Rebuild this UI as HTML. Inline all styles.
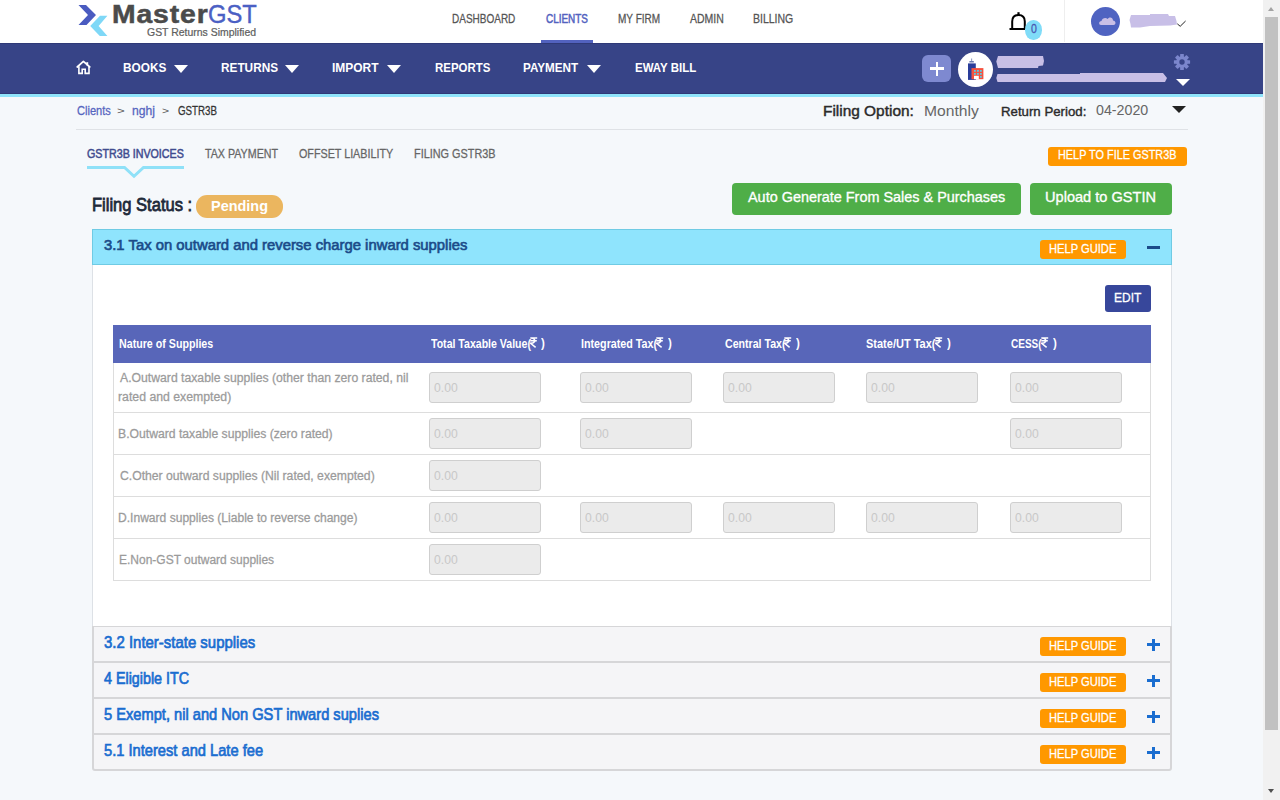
<!DOCTYPE html>
<html><head><meta charset="utf-8"><title>GSTR3B</title><style>
html,body{margin:0;padding:0}
body{width:1280px;height:800px;overflow:hidden;background:#f5f8fb;font-family:"Liberation Sans",sans-serif;position:relative}
.a{position:absolute}
.t{position:absolute;line-height:1;white-space:nowrap;transform-origin:0 0}
</style></head><body>
<div class="a" style="left:0px;top:0px;width:1263px;height:43px;background:#fff;"></div>
<svg class="a" style="left:74px;top:0px" width="40" height="40"><polygon points="4.5,5 12,5 22,15 12.5,25 4.5,25 14,15" fill="#4a5bc0"/><polygon points="26,15.8 33.4,15.8 24.6,26 33.4,36 25.8,36 16.2,26" fill="#7fd8f7"/></svg>
<div class="a" style="left:541px;top:40px;width:52px;height:3px;background:#5262bf;"></div>
<div class="a" style="left:1064px;top:0px;width:1px;height:42px;background:#eee;"></div>
<svg class="a" style="left:1005px;top:8px" width="24" height="26"><path d="M7.2,21 V13.5 C7.2,9 10,7 13.5,7 C17,7 19.8,9 19.8,13.5 V21" fill="none" stroke="#000" stroke-width="2"/><path d="M4.5,21 H20" stroke="#000" stroke-width="2"/><path d="M13.5,7.5 V4.2" stroke="#000" stroke-width="2.2"/></svg>
<div class="a" style="left:1025px;top:20px;width:16.5px;height:19.5px;border-radius:50%;background:#80dcf8"></div>
<div class="a" style="left:1090.5px;top:6.5px;width:29px;height:29px;border-radius:50%;background:#4f63c1"></div>
<svg class="a" style="left:1098px;top:14px" width="20" height="14"><path d="M3,11 C0.5,11 0.5,7 3.5,7 C4,4 8,3 9.5,5 C11,2.5 15,3 15,6.5 C18,6.5 18.5,11 15.5,11 Z" fill="#c9bfe6"/></svg>
<svg class="a" style="left:0;top:0" width="1263" height="43"><polygon points="1129.5,20 1131,15 1150,15 1150,14 1168,14 1169,16 1175,16 1176.5,21 1177,24.5 1170,25.5 1150,26 1140,27.5 1131,27.5 1130.5,24" fill="#c8bfe7"/></svg>
<svg class="a" style="left:1176px;top:18px" width="12" height="10"><path d="M1.3,5.8 L4.2,8.3 L9.6,3" fill="none" stroke="#222" stroke-width="1"/></svg>
<div class="a" style="left:0px;top:43px;width:1263px;height:51px;background:#374487;"></div>
<div class="a" style="left:0px;top:94px;width:1263px;height:3px;background:#8fe4fb;"></div>
<div class="a" style="left:0px;top:43px;width:1263px;height:1px;background:#2f3977;"></div>
<div class="a" style="left:0px;top:93px;width:1263px;height:1px;background:#2f3977;"></div>
<svg class="a" style="left:72px;top:56px" width="24" height="24"><path d="M5.2,11 L11.4,5.4 L17.8,11" fill="none" stroke="#fff" stroke-width="1.7" stroke-linecap="round" stroke-linejoin="round"/><path d="M6.9,10.2 V17.4 H10.2 V13.2 H13.2 V17.4 H17 V10.2" fill="none" stroke="#fff" stroke-width="1.6"/><rect x="14.3" y="6.2" width="1.9" height="3.2" fill="#fff"/></svg>
<div class="a" style="left:173.6px;top:64.6px;width:0;height:0;border-left:7.25px solid transparent;border-right:7.25px solid transparent;border-top:8px solid #fff"></div>
<div class="a" style="left:285.4px;top:64.6px;width:0;height:0;border-left:7.25px solid transparent;border-right:7.25px solid transparent;border-top:8px solid #fff"></div>
<div class="a" style="left:387px;top:64.6px;width:0;height:0;border-left:7.25px solid transparent;border-right:7.25px solid transparent;border-top:8px solid #fff"></div>
<div class="a" style="left:587px;top:64.6px;width:0;height:0;border-left:7.25px solid transparent;border-right:7.25px solid transparent;border-top:8px solid #fff"></div>
<div class="a" style="left:922px;top:55px;width:29px;height:27px;border-radius:6px;background:#7e89d0"></div>
<div class="a" style="left:935.8px;top:61.5px;width:2.5px;height:14px;background:#fff;"></div>
<div class="a" style="left:930px;top:67.3px;width:14px;height:2.5px;background:#fff;"></div>
<div class="a" style="left:958px;top:52px;width:35px;height:35px;border-radius:50%;background:#fff"></div>
<svg class="a" style="left:962px;top:55px" width="28" height="28"><rect x="9.3" y="3.5" width="0.8" height="2.5" fill="#6b7bb0"/><rect x="7.4" y="6" width="4.4" height="1.5" fill="#6b7bb0"/><rect x="6" y="8.4" width="7.8" height="16.5" fill="#2a3d9a"/><rect x="9.5" y="13.1" width="11.9" height="11.1" fill="#f5523f"/><rect x="12" y="20.8" width="4.8" height="3.4" fill="#fff"/><rect x="12" y="15" width="1.8" height="1.8" fill="#5ec9e0"/><rect x="12" y="18" width="1.8" height="1.8" fill="#5ec9e0"/><rect x="15" y="15" width="1.8" height="1.8" fill="#5ec9e0"/><rect x="15" y="18" width="1.8" height="1.8" fill="#5ec9e0"/><rect x="18" y="15" width="1.8" height="1.8" fill="#5ec9e0"/><rect x="18" y="18" width="1.8" height="1.8" fill="#5ec9e0"/><rect x="18" y="21" width="1.8" height="1.8" fill="#5ec9e0"/></svg>
<svg class="a" style="left:0;top:43px" width="1263" height="51"><g transform="translate(0,-43)" fill="#c8bfe6"><polygon points="996.3,61.5 998,56 1043,56 1044,61 1043,65.5 1038.5,66 1038,68 998,68"/><polygon points="996.3,78 997.5,74 1080,74 1080,73 1163,73 1167,78 1165,82 997.5,82"/></g></svg>
<svg class="a" style="left:1172px;top:52px" width="20" height="20"><g transform="translate(10,10)"><rect x="-1.85" y="-8.1" width="3.7" height="4.2" rx="0.5" fill="#7b86cc" transform="rotate(0)"/><rect x="-1.85" y="-8.1" width="3.7" height="4.2" rx="0.5" fill="#7b86cc" transform="rotate(45)"/><rect x="-1.85" y="-8.1" width="3.7" height="4.2" rx="0.5" fill="#7b86cc" transform="rotate(90)"/><rect x="-1.85" y="-8.1" width="3.7" height="4.2" rx="0.5" fill="#7b86cc" transform="rotate(135)"/><rect x="-1.85" y="-8.1" width="3.7" height="4.2" rx="0.5" fill="#7b86cc" transform="rotate(180)"/><rect x="-1.85" y="-8.1" width="3.7" height="4.2" rx="0.5" fill="#7b86cc" transform="rotate(225)"/><rect x="-1.85" y="-8.1" width="3.7" height="4.2" rx="0.5" fill="#7b86cc" transform="rotate(270)"/><rect x="-1.85" y="-8.1" width="3.7" height="4.2" rx="0.5" fill="#7b86cc" transform="rotate(315)"/><circle r="5.8" fill="#7b86cc"/><circle r="2.7" fill="#374487"/></g></svg>
<div class="a" style="left:1176px;top:79px;width:0;height:0;border-left:7.5px solid transparent;border-right:7.5px solid transparent;border-top:7px solid #fff"></div>
<div class="a" style="left:1171.6px;top:106px;width:0;height:0;border-left:7.0px solid transparent;border-right:7.0px solid transparent;border-top:7.6px solid #222"></div>
<div class="a" style="left:76px;top:129px;width:1112px;height:1px;background:#dfe2e6;"></div>
<svg class="a" style="left:80px;top:160px" width="110" height="24"><polyline points="7,7.5 44.5,7.5 54,16.3 63.5,7.5 104,7.5" fill="none" stroke="#8fe1f8" stroke-width="3"/></svg>
<div class="a" style="left:1048px;top:147px;width:139px;height:19px;border-radius:3px;background:#ff9800"></div>
<div class="a" style="left:196px;top:195px;width:87px;height:22.5px;border-radius:11px;background:#ebb65f"></div>
<div class="a" style="left:732px;top:183px;width:289px;height:32px;border-radius:4px;background:#4fae48"></div>
<div class="a" style="left:1029.5px;top:183px;width:142.5px;height:32px;border-radius:4px;background:#4fae48"></div>
<div class="a" style="left:92px;top:229px;width:1078px;height:396px;border:1px solid #dde1e6;border-bottom-color:#d6d6d8;background:#fff"></div>
<div class="a" style="left:92px;top:229px;width:1078px;height:34px;border:1px solid #6fcbe4;background:#8fe4fd"></div>
<div class="a" style="left:1040px;top:240px;width:86px;height:19px;border-radius:3px;background:#ff9800"></div>
<div class="a" style="left:1147px;top:245.6px;width:13px;height:3.8px;background:#1b4b89;"></div>
<div class="a" style="left:1105px;top:285px;width:46px;height:27px;border-radius:3px;background:#37479b"></div>
<div class="a" style="left:113px;top:325px;width:1038px;height:38px;background:#5866b9;"></div>
<svg class="a" style="left:529.8000000000001px;top:337px" width="8" height="11"><path d="M0.3,0.9 H7.2 M0.3,3.7 H6.8 M0.6,0.9 C4.6,0.9 5.2,3.5 4.6,4.6 C4,5.8 2.2,6.3 0.6,6.3 L5.6,10.3" fill="none" stroke="#fff" stroke-width="1.5"/></svg>
<svg class="a" style="left:656.1px;top:337px" width="8" height="11"><path d="M0.3,0.9 H7.2 M0.3,3.7 H6.8 M0.6,0.9 C4.6,0.9 5.2,3.5 4.6,4.6 C4,5.8 2.2,6.3 0.6,6.3 L5.6,10.3" fill="none" stroke="#fff" stroke-width="1.5"/></svg>
<svg class="a" style="left:784.1px;top:337px" width="8" height="11"><path d="M0.3,0.9 H7.2 M0.3,3.7 H6.8 M0.6,0.9 C4.6,0.9 5.2,3.5 4.6,4.6 C4,5.8 2.2,6.3 0.6,6.3 L5.6,10.3" fill="none" stroke="#fff" stroke-width="1.5"/></svg>
<svg class="a" style="left:935.1px;top:337px" width="8" height="11"><path d="M0.3,0.9 H7.2 M0.3,3.7 H6.8 M0.6,0.9 C4.6,0.9 5.2,3.5 4.6,4.6 C4,5.8 2.2,6.3 0.6,6.3 L5.6,10.3" fill="none" stroke="#fff" stroke-width="1.5"/></svg>
<svg class="a" style="left:1041.1px;top:337px" width="8" height="11"><path d="M0.3,0.9 H7.2 M0.3,3.7 H6.8 M0.6,0.9 C4.6,0.9 5.2,3.5 4.6,4.6 C4,5.8 2.2,6.3 0.6,6.3 L5.6,10.3" fill="none" stroke="#fff" stroke-width="1.5"/></svg>
<div class="a" style="left:113px;top:363px;width:1px;height:218px;background:#dddddd;"></div>
<div class="a" style="left:1150px;top:363px;width:1px;height:218px;background:#dddddd;"></div>
<div class="a" style="left:113px;top:412.0px;width:1038px;height:1px;background:#dddddd;"></div>
<div class="a" style="left:113px;top:454.0px;width:1038px;height:1px;background:#dddddd;"></div>
<div class="a" style="left:113px;top:496.0px;width:1038px;height:1px;background:#dddddd;"></div>
<div class="a" style="left:113px;top:538.0px;width:1038px;height:1px;background:#dddddd;"></div>
<div class="a" style="left:113px;top:580.0px;width:1038px;height:1px;background:#dddddd;"></div>
<div class="a" style="left:429px;top:372px;width:110px;height:29px;border:1px solid #cfcfcf;border-radius:3px;background:#ebebeb"></div>
<div class="a" style="left:580px;top:372px;width:110px;height:29px;border:1px solid #cfcfcf;border-radius:3px;background:#ebebeb"></div>
<div class="a" style="left:723px;top:372px;width:110px;height:29px;border:1px solid #cfcfcf;border-radius:3px;background:#ebebeb"></div>
<div class="a" style="left:866px;top:372px;width:110px;height:29px;border:1px solid #cfcfcf;border-radius:3px;background:#ebebeb"></div>
<div class="a" style="left:1010px;top:372px;width:110px;height:29px;border:1px solid #cfcfcf;border-radius:3px;background:#ebebeb"></div>
<div class="a" style="left:429px;top:418px;width:110px;height:29px;border:1px solid #cfcfcf;border-radius:3px;background:#ebebeb"></div>
<div class="a" style="left:580px;top:418px;width:110px;height:29px;border:1px solid #cfcfcf;border-radius:3px;background:#ebebeb"></div>
<div class="a" style="left:1010px;top:418px;width:110px;height:29px;border:1px solid #cfcfcf;border-radius:3px;background:#ebebeb"></div>
<div class="a" style="left:429px;top:460px;width:110px;height:29px;border:1px solid #cfcfcf;border-radius:3px;background:#ebebeb"></div>
<div class="a" style="left:429px;top:502px;width:110px;height:29px;border:1px solid #cfcfcf;border-radius:3px;background:#ebebeb"></div>
<div class="a" style="left:580px;top:502px;width:110px;height:29px;border:1px solid #cfcfcf;border-radius:3px;background:#ebebeb"></div>
<div class="a" style="left:723px;top:502px;width:110px;height:29px;border:1px solid #cfcfcf;border-radius:3px;background:#ebebeb"></div>
<div class="a" style="left:866px;top:502px;width:110px;height:29px;border:1px solid #cfcfcf;border-radius:3px;background:#ebebeb"></div>
<div class="a" style="left:1010px;top:502px;width:110px;height:29px;border:1px solid #cfcfcf;border-radius:3px;background:#ebebeb"></div>
<div class="a" style="left:429px;top:544px;width:110px;height:29px;border:1px solid #cfcfcf;border-radius:3px;background:#ebebeb"></div>
<div class="a" style="left:92px;top:626px;width:1076px;height:34px;border:2px solid #d6d6d8;border-top:1px solid #d6d6d8;background:#f5f5f7;"></div>
<div class="a" style="left:1040px;top:637px;width:86px;height:19px;border-radius:3px;background:#ff9800"></div>
<div class="a" style="left:1151.8px;top:638.6px;width:3.2px;height:12.6px;background:#1a6dd0;"></div>
<div class="a" style="left:1147px;top:643.3px;width:13px;height:3.2px;background:#1a6dd0;"></div>
<div class="a" style="left:92px;top:662px;width:1076px;height:34px;border:2px solid #d6d6d8;border-top:1px solid #d6d6d8;background:#f5f5f7;"></div>
<div class="a" style="left:1040px;top:673px;width:86px;height:19px;border-radius:3px;background:#ff9800"></div>
<div class="a" style="left:1151.8px;top:674.6px;width:3.2px;height:12.6px;background:#1a6dd0;"></div>
<div class="a" style="left:1147px;top:679.3px;width:13px;height:3.2px;background:#1a6dd0;"></div>
<div class="a" style="left:92px;top:698px;width:1076px;height:34px;border:2px solid #d6d6d8;border-top:1px solid #d6d6d8;background:#f5f5f7;"></div>
<div class="a" style="left:1040px;top:709px;width:86px;height:19px;border-radius:3px;background:#ff9800"></div>
<div class="a" style="left:1151.8px;top:710.6px;width:3.2px;height:12.6px;background:#1a6dd0;"></div>
<div class="a" style="left:1147px;top:715.3px;width:13px;height:3.2px;background:#1a6dd0;"></div>
<div class="a" style="left:92px;top:734px;width:1076px;height:34px;border:2px solid #d6d6d8;border-top:1px solid #d6d6d8;background:#f5f5f7;border-radius:0 0 3px 3px;"></div>
<div class="a" style="left:1040px;top:745px;width:86px;height:19px;border-radius:3px;background:#ff9800"></div>
<div class="a" style="left:1151.8px;top:746.6px;width:3.2px;height:12.6px;background:#1a6dd0;"></div>
<div class="a" style="left:1147px;top:751.3px;width:13px;height:3.2px;background:#1a6dd0;"></div>
<div class="a" style="left:1263px;top:0px;width:17px;height:800px;background:#f1f1f1;"></div>
<div class="a" style="left:1265px;top:17px;width:13px;height:713px;background:#c1c1c1;"></div>
<div class="a" style="left:1268px;top:7px;width:0;height:0;border-left:3.5px solid transparent;border-right:3.5px solid transparent;border-bottom:4px solid #a3a3a3"></div>
<div class="a" style="left:1268px;top:789px;width:0;height:0;border-left:3.5px solid transparent;border-right:3.5px solid transparent;border-top:4px solid #505050"></div>
<div class="t" style="left:111.57px;top:1.39px;font-size:26.0px;font-weight:700;color:#4b4b4b;transform:scaleX(1.0901);letter-spacing:0.8px;-webkit-text-stroke:0.5px #4b4b4b;">Master</div>
<div class="t" style="left:207.59px;top:1.39px;font-size:26.0px;font-weight:400;color:#4b60c4;transform:scaleX(0.9135);-webkit-text-stroke:0.4px #4b60c4;">GST</div>
<div class="t" style="left:146.50px;top:27.11px;font-size:10.5px;font-weight:400;-webkit-text-stroke:0.23px #5f5f5f;color:#5f5f5f;transform:scaleX(0.9954);">GST Returns Simplified</div>
<div class="t" style="left:451.87px;top:12.84px;font-size:12.0px;font-weight:400;-webkit-text-stroke:0.26px #555;color:#555;transform:scaleX(0.8333);">DASHBOARD</div>
<div class="t" style="left:545.80px;top:12.84px;font-size:12.0px;font-weight:400;-webkit-text-stroke:0.5px #5262bf;color:#5262bf;transform:scaleX(0.8275);">CLIENTS</div>
<div class="t" style="left:617.56px;top:12.84px;font-size:12.0px;font-weight:400;-webkit-text-stroke:0.26px #555;color:#555;transform:scaleX(0.8367);">MY FIRM</div>
<div class="t" style="left:689.80px;top:12.84px;font-size:12.0px;font-weight:400;-webkit-text-stroke:0.26px #555;color:#555;transform:scaleX(0.8737);">ADMIN</div>
<div class="t" style="left:753.02px;top:12.84px;font-size:12.0px;font-weight:400;-webkit-text-stroke:0.26px #555;color:#555;transform:scaleX(0.8756);">BILLING</div>
<div class="t" style="left:1030.50px;top:21.99px;font-size:13.0px;font-weight:400;-webkit-text-stroke:0.29px #4a55b0;color:#4a55b0;transform:scaleX(0.8143);">0</div>
<div class="t" style="left:122.59px;top:60.99px;font-size:13.0px;font-weight:700;color:#fff;transform:scaleX(0.9087);">BOOKS</div>
<div class="t" style="left:220.69px;top:60.99px;font-size:13.0px;font-weight:700;color:#fff;transform:scaleX(0.9081);">RETURNS</div>
<div class="t" style="left:332.48px;top:60.99px;font-size:13.0px;font-weight:700;color:#fff;transform:scaleX(0.9200);">IMPORT</div>
<div class="t" style="left:435.12px;top:60.99px;font-size:13.0px;font-weight:700;color:#fff;transform:scaleX(0.8806);">REPORTS</div>
<div class="t" style="left:523.10px;top:60.99px;font-size:13.0px;font-weight:700;color:#fff;transform:scaleX(0.8984);">PAYMENT</div>
<div class="t" style="left:634.72px;top:60.99px;font-size:13.0px;font-weight:700;color:#fff;transform:scaleX(0.8824);">EWAY BILL</div>
<div class="t" style="left:76.90px;top:104.74px;font-size:12.0px;font-weight:400;-webkit-text-stroke:0.26px #5565c0;color:#5565c0;transform:scaleX(0.9216);">Clients</div>
<div class="t" style="left:117.19px;top:106.80px;font-size:8.5px;font-weight:400;color:#555;transform:scaleX(1.5625);">&gt;</div>
<div class="t" style="left:132.49px;top:104.74px;font-size:12px;font-weight:400;-webkit-text-stroke:0.26px #5565c0;color:#5565c0;transform:scaleX(1.0119);">nghj</div>
<div class="t" style="left:161.56px;top:106.80px;font-size:8.5px;font-weight:400;color:#555;transform:scaleX(1.4375);">&gt;</div>
<div class="t" style="left:177.50px;top:104.74px;font-size:12.0px;font-weight:400;-webkit-text-stroke:0.26px #333;color:#333;transform:scaleX(0.8125);">GSTR3B</div>
<div class="t" style="left:823.01px;top:102.88px;font-size:15.5px;font-weight:400;-webkit-text-stroke:0.46px #2b2b2b;color:#2b2b2b;transform:scaleX(0.9944);">Filing Option:</div>
<div class="t" style="left:924.49px;top:102.88px;font-size:15.5px;font-weight:400;color:#666;transform:scaleX(1.0094);">Monthly</div>
<div class="t" style="left:1001.02px;top:104.57px;font-size:13.5px;font-weight:400;-webkit-text-stroke:0.4px #2b2b2b;color:#2b2b2b;transform:scaleX(0.9800);">Return Period:</div>
<div class="t" style="left:1095.80px;top:102.62px;font-size:14.5px;font-weight:400;color:#666;transform:scaleX(0.9811);">04-2020</div>
<div class="t" style="left:86.90px;top:147.64px;font-size:12.0px;font-weight:400;-webkit-text-stroke:0.5px #3f4c8f;color:#3f4c8f;transform:scaleX(0.8908);">GSTR3B INVOICES</div>
<div class="t" style="left:204.60px;top:147.64px;font-size:12.0px;font-weight:400;-webkit-text-stroke:0.26px #666;color:#666;transform:scaleX(0.8902);">TAX PAYMENT</div>
<div class="t" style="left:299.00px;top:147.64px;font-size:12.0px;font-weight:400;-webkit-text-stroke:0.26px #666;color:#666;transform:scaleX(0.8952);">OFFSET LIABILITY</div>
<div class="t" style="left:413.69px;top:147.64px;font-size:12.0px;font-weight:400;-webkit-text-stroke:0.26px #666;color:#666;transform:scaleX(0.9067);">FILING GSTR3B</div>
<div class="t" style="left:1057.63px;top:149.42px;font-size:12.5px;font-weight:400;-webkit-text-stroke:0.27px #fff;color:#fff;transform:scaleX(0.8704);">HELP TO FILE GSTR3B</div>
<div class="t" style="left:91.51px;top:195.54px;font-size:18.5px;font-weight:400;-webkit-text-stroke:0.78px #1d2939;color:#1d2939;transform:scaleX(0.8936);">Filing Status :</div>
<div class="t" style="left:211.07px;top:198.08px;font-size:15.5px;font-weight:700;color:#fff;transform:scaleX(0.9322);">Pending</div>
<div class="t" style="left:748.00px;top:190.22px;font-size:14.5px;font-weight:400;-webkit-text-stroke:0.32px #fff;color:#fff;transform:scaleX(0.9946);">Auto Generate From Sales &amp; Purchases</div>
<div class="t" style="left:1044.99px;top:190.22px;font-size:14.5px;font-weight:400;-webkit-text-stroke:0.32px #fff;color:#fff;transform:scaleX(1.0055);">Upload to GSTIN</div>
<div class="t" style="left:103.75px;top:237.48px;font-size:15.5px;font-weight:400;-webkit-text-stroke:0.65px #1b4b89;color:#1b4b89;transform:scaleX(0.9570);">3.1 Tax on outward and reverse charge inward supplies</div>
<div class="t" style="left:1049.07px;top:242.59px;font-size:12.0px;font-weight:400;-webkit-text-stroke:0.26px #fff;color:#fff;transform:scaleX(0.9296);">HELP GUIDE</div>
<div class="t" style="left:1113.83px;top:290.89px;font-size:13.0px;font-weight:400;-webkit-text-stroke:0.29px #fff;color:#fff;transform:scaleX(0.9224);">EDIT</div>
<div class="t" style="left:118.98px;top:336.79px;font-size:13.0px;font-weight:700;color:#fff;transform:scaleX(0.8204);">Nature of Supplies</div>
<div class="t" style="left:430.60px;top:336.79px;font-size:13.0px;font-weight:700;color:#fff;transform:scaleX(0.8122);">Total Taxable Value(</div>
<div class="t" style="left:541.30px;top:336.37px;font-size:13.5px;font-weight:700;color:#fff;transform:scaleX(0.8500);">)</div>
<div class="t" style="left:580.87px;top:336.79px;font-size:13.0px;font-weight:700;color:#fff;transform:scaleX(0.8253);">Integrated Tax(</div>
<div class="t" style="left:667.60px;top:336.37px;font-size:13.5px;font-weight:700;color:#fff;transform:scaleX(0.8500);">)</div>
<div class="t" style="left:724.50px;top:336.79px;font-size:13.0px;font-weight:700;color:#fff;transform:scaleX(0.8149);">Central Tax(</div>
<div class="t" style="left:795.60px;top:336.37px;font-size:13.5px;font-weight:700;color:#fff;transform:scaleX(0.8500);">)</div>
<div class="t" style="left:866.45px;top:336.79px;font-size:13.0px;font-weight:700;color:#fff;transform:scaleX(0.8457);">State/UT Tax(</div>
<div class="t" style="left:946.60px;top:336.37px;font-size:13.5px;font-weight:700;color:#fff;transform:scaleX(0.8500);">)</div>
<div class="t" style="left:1011.00px;top:336.79px;font-size:13.0px;font-weight:700;color:#fff;transform:scaleX(0.7700);">CESS(</div>
<div class="t" style="left:1052.60px;top:336.37px;font-size:13.5px;font-weight:700;color:#fff;transform:scaleX(0.8500);">)</div>
<div class="t" style="left:119.50px;top:372.14px;font-size:12.0px;font-weight:400;-webkit-text-stroke:0.26px #9b9b9b;color:#9b9b9b;transform:scaleX(1.0173);">A.Outward taxable supplies (other than zero rated, nil</div>
<div class="t" style="left:118.48px;top:390.94px;font-size:12.0px;font-weight:400;-webkit-text-stroke:0.26px #9b9b9b;color:#9b9b9b;transform:scaleX(1.0229);">rated and exempted)</div>
<div class="t" style="left:118.48px;top:427.64px;font-size:12.0px;font-weight:400;-webkit-text-stroke:0.26px #9b9b9b;color:#9b9b9b;transform:scaleX(1.0152);">B.Outward taxable supplies (zero rated)</div>
<div class="t" style="left:119.50px;top:469.64px;font-size:12.0px;font-weight:400;-webkit-text-stroke:0.26px #9b9b9b;color:#9b9b9b;transform:scaleX(1.0156);">C.Other outward supplies (Nil rated, exempted)</div>
<div class="t" style="left:118.49px;top:511.64px;font-size:12.0px;font-weight:400;-webkit-text-stroke:0.26px #9b9b9b;color:#9b9b9b;transform:scaleX(1.0059);">D.Inward supplies (Liable to reverse change)</div>
<div class="t" style="left:118.50px;top:553.64px;font-size:12.0px;font-weight:400;-webkit-text-stroke:0.26px #9b9b9b;color:#9b9b9b;transform:scaleX(0.9994);">E.Non-GST outward supplies</div>
<div class="t" style="left:434.40px;top:380.57px;font-size:13.5px;font-weight:400;color:#c8c8c8;transform:scaleX(0.9000);">0.00</div>
<div class="t" style="left:585.40px;top:380.57px;font-size:13.5px;font-weight:400;color:#c8c8c8;transform:scaleX(0.9000);">0.00</div>
<div class="t" style="left:728.40px;top:380.57px;font-size:13.5px;font-weight:400;color:#c8c8c8;transform:scaleX(0.9000);">0.00</div>
<div class="t" style="left:871.40px;top:380.57px;font-size:13.5px;font-weight:400;color:#c8c8c8;transform:scaleX(0.9000);">0.00</div>
<div class="t" style="left:1015.40px;top:380.57px;font-size:13.5px;font-weight:400;color:#c8c8c8;transform:scaleX(0.9000);">0.00</div>
<div class="t" style="left:434.40px;top:426.57px;font-size:13.5px;font-weight:400;color:#c8c8c8;transform:scaleX(0.9000);">0.00</div>
<div class="t" style="left:585.40px;top:426.57px;font-size:13.5px;font-weight:400;color:#c8c8c8;transform:scaleX(0.9000);">0.00</div>
<div class="t" style="left:1015.40px;top:426.57px;font-size:13.5px;font-weight:400;color:#c8c8c8;transform:scaleX(0.9000);">0.00</div>
<div class="t" style="left:434.40px;top:468.57px;font-size:13.5px;font-weight:400;color:#c8c8c8;transform:scaleX(0.9000);">0.00</div>
<div class="t" style="left:434.40px;top:510.57px;font-size:13.5px;font-weight:400;color:#c8c8c8;transform:scaleX(0.9000);">0.00</div>
<div class="t" style="left:585.40px;top:510.57px;font-size:13.5px;font-weight:400;color:#c8c8c8;transform:scaleX(0.9000);">0.00</div>
<div class="t" style="left:728.40px;top:510.57px;font-size:13.5px;font-weight:400;color:#c8c8c8;transform:scaleX(0.9000);">0.00</div>
<div class="t" style="left:871.40px;top:510.57px;font-size:13.5px;font-weight:400;color:#c8c8c8;transform:scaleX(0.9000);">0.00</div>
<div class="t" style="left:1015.40px;top:510.57px;font-size:13.5px;font-weight:400;color:#c8c8c8;transform:scaleX(0.9000);">0.00</div>
<div class="t" style="left:434.40px;top:552.57px;font-size:13.5px;font-weight:400;color:#c8c8c8;transform:scaleX(0.9000);">0.00</div>
<div class="t" style="left:103.75px;top:634.13px;font-size:16.5px;font-weight:400;-webkit-text-stroke:0.69px #1a6dd0;color:#1a6dd0;transform:scaleX(0.9057);">3.2 Inter-state supplies</div>
<div class="t" style="left:1049.07px;top:639.59px;font-size:12.0px;font-weight:400;-webkit-text-stroke:0.26px #fff;color:#fff;transform:scaleX(0.9296);">HELP GUIDE</div>
<div class="t" style="left:103.75px;top:670.13px;font-size:16.5px;font-weight:400;-webkit-text-stroke:0.69px #1a6dd0;color:#1a6dd0;transform:scaleX(0.8668);">4 Eligible ITC</div>
<div class="t" style="left:1049.07px;top:675.59px;font-size:12.0px;font-weight:400;-webkit-text-stroke:0.26px #fff;color:#fff;transform:scaleX(0.9296);">HELP GUIDE</div>
<div class="t" style="left:103.75px;top:706.13px;font-size:16.5px;font-weight:400;-webkit-text-stroke:0.69px #1a6dd0;color:#1a6dd0;transform:scaleX(0.8879);">5 Exempt, nil and Non GST inward suplies</div>
<div class="t" style="left:1049.07px;top:711.59px;font-size:12.0px;font-weight:400;-webkit-text-stroke:0.26px #fff;color:#fff;transform:scaleX(0.9296);">HELP GUIDE</div>
<div class="t" style="left:103.75px;top:742.13px;font-size:16.5px;font-weight:400;-webkit-text-stroke:0.69px #1a6dd0;color:#1a6dd0;transform:scaleX(0.8891);">5.1 Interest and Late fee</div>
<div class="t" style="left:1049.07px;top:747.59px;font-size:12.0px;font-weight:400;-webkit-text-stroke:0.26px #fff;color:#fff;transform:scaleX(0.9296);">HELP GUIDE</div>
</body></html>
